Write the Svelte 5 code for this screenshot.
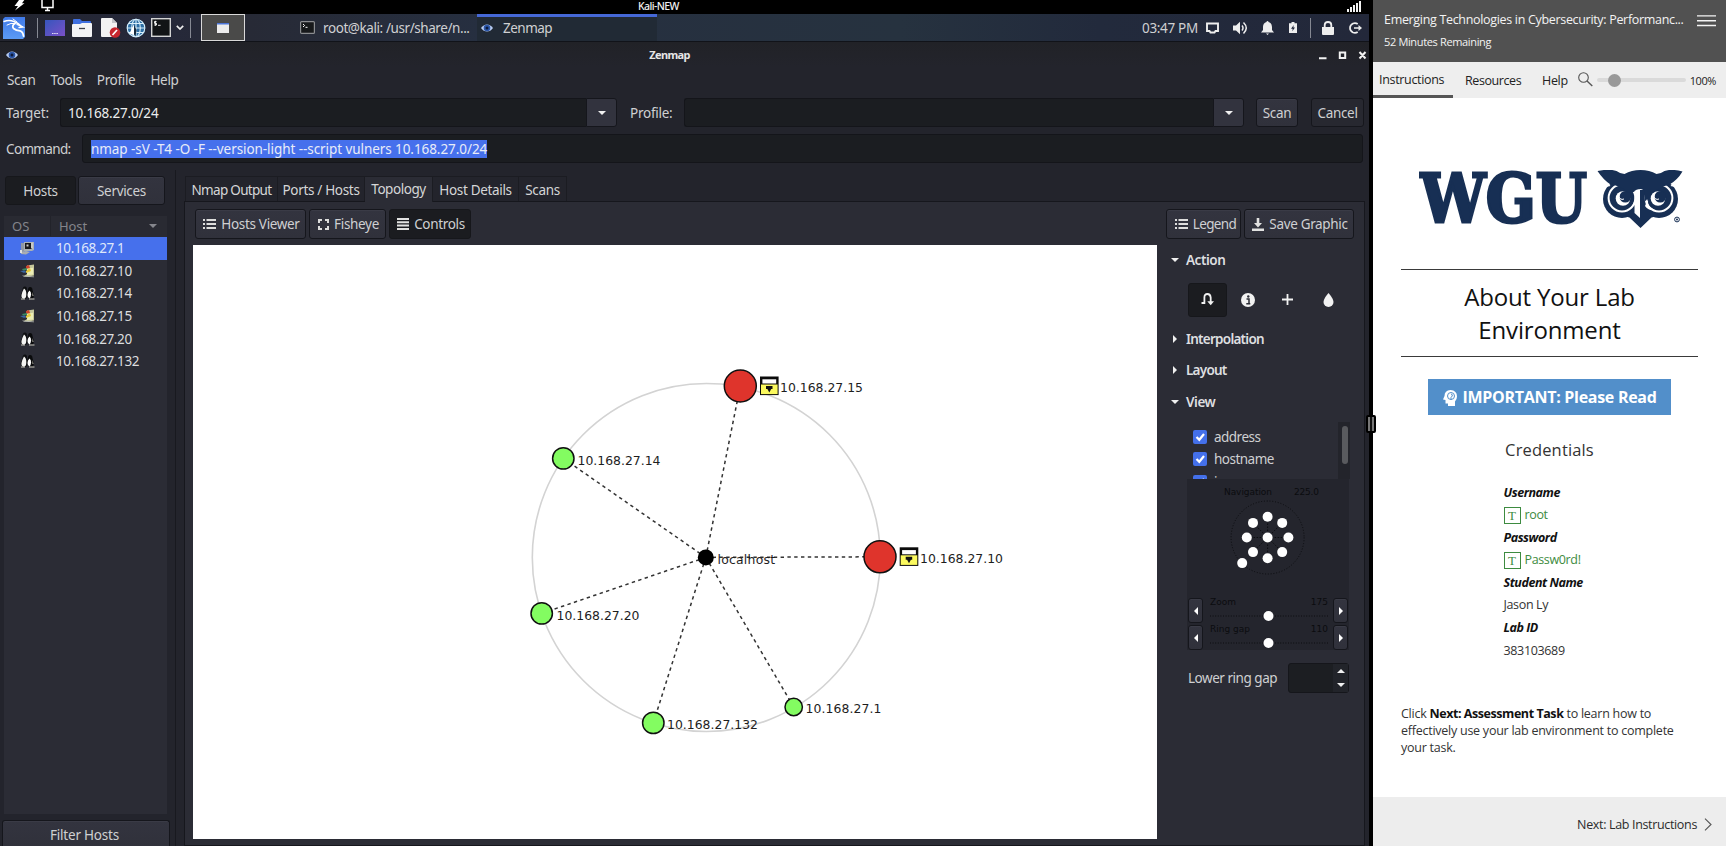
<script>
  const menus = ['Scan', 'Tools', 'Profile', 'Help'];

  const hosts = [
    { ip: '10.168.27.1', os: 'router' },
    { ip: '10.168.27.10', os: 'windows' },
    { ip: '10.168.27.14', os: 'linux' },
    { ip: '10.168.27.15', os: 'windows' },
    { ip: '10.168.27.20', os: 'linux' },
    { ip: '10.168.27.132', os: 'linux' }
  ];
  let selectedHost = $state('10.168.27.1');

  const tabs = [
    { label: 'Nmap Output', width: 93, tight: true },
    { label: 'Ports / Hosts', width: 87 },
    { label: 'Topology', width: 68, tight: true },
    { label: 'Host Details', width: 86 },
    { label: 'Scans', width: 48 }
  ];
  let activeTab = $state('Topology');

  const center = { x: 705.8, y: 557.4 };
  const nodes = [
    { ip: '10.168.27.15', x: 740.3, y: 386, r: 16, risk: 'high', tx: 780, w: 83 },
    { ip: '10.168.27.14', x: 563.3, y: 458.4, r: 10.7, risk: 'low', tx: 577.5, w: 83 },
    { ip: '10.168.27.20', x: 541.7, y: 613.4, r: 10.7, risk: 'low', tx: 556.5, w: 83 },
    { ip: '10.168.27.132', x: 653.3, y: 722.9, r: 10.7, risk: 'low', tx: 667, w: 91 },
    { ip: '10.168.27.1', x: 793.7, y: 707, r: 8.7, risk: 'low', tx: 805.5, w: 76 },
    { ip: '10.168.27.10', x: 880, y: 556.8, r: 16, risk: 'high', tx: 920, w: 83 }
  ];

  const navDots = [
    [0, 0], [0, -20.8], [14.6, -14.6], [20.8, 0], [14.6, 14.6],
    [0, 20.8], [-14.6, 14.6], [-20.8, 0], [-14.6, -14.6], [-25.4, 25.6]
  ];

  const sliders = [
    { name: 'Zoom', value: '175' },
    { name: 'Ring gap', value: '110' }
  ];

  const signal = [3, 5, 7, 9, 11];
</script>

{#snippet eye()}
  <svg width="12" height="8" viewBox="0 0 12 8">
    <path d="M0 4Q2.5 .4 6 .4T12 4Q9.500 7.600 6 7.600T0 4Z" fill="#b9cdf3" />
    <circle cx="6" cy="4" r="3.300" fill="#2b56a8" />
    <circle cx="6" cy="4" r="1.500" fill="#0c1a3a" />
  </svg>
{/snippet}

{#snippet listIcon()}
  <svg width="13" height="10" viewBox="0 0 13 10" fill="#dededd">
    <path d="M0 0h2v2H0zM3.500 0H13v2H3.500zM0 4h2v2H0zM3.500 4H13v2H3.500zM0 8h2v2H0zM3.500 8H13v2H3.500z" />
  </svg>
{/snippet}

{#snippet osIcon(os)}
  <svg width="15" height="14" viewBox="0 0 15 14">
    {#if os === 'router'}
      <path d="M1 2h3v10H1z" fill="#8f98a4" />
      <path d="M4 1h10v8l-2 1H4z" fill="#a9b0b5" />
      <path d="M5 2h7v6H5z" fill="#17191b" />
      <path d="M6.500 3.500h2v2h-2zM11 1.500h2v6h-2z" fill="#c9cac6" />
      <path d="M1 11l5-1 4 1-4 2.500-5-.5z" fill="#a9adb0" />
      <path d="M0 9h2v3H0z" fill="#dfe2e4" />
    {:else if os === 'windows'}
      <path d="M7 1.500l7-1v11l-4 .8-6-.4 3-2z" fill="#c4c59a" />
      <path d="M7 4.500l6-.8v6.800l-6 .7z" fill="#ecedb4" />
      <path d="M6 2l3-1 1 3-4 1z" fill="#c9442c" />
      <path d="M2 5l5-1v2l-4 .6z" fill="#3b8a60" />
      <path d="M0 7l5-.5 1.500 2-3 .3z" fill="#3a66a0" />
      <path d="M6 7l4-3 1 3-5 2z" fill="#e5c93a" />
      <path d="M2 11.500l7 .4 5 .6v.8L4 12.800z" fill="#b9bcb2" />
    {:else}
      <path d="M5 .5q2 0 2 3 1.500 3 1 7l-2 2.500H2L.5 10 2.500 4q0-3.500 2.500-3.500z" fill="#0d0e10" />
      <path d="M4 2.500q2.500 1.500 2.300 6T3.500 12.800Q1 12 1.500 9T4 2.500z" fill="#f4f4f2" />
      <path d="M10 1q2.500 0 2.500 3l1.500 5.500-1 3H8.500l-1-3L8 4q0-3 2-3z" fill="#0a0b0c" />
      <path d="M9.500 4.500q1.800 1.500 1.600 4T9.500 12.500Q7.500 12 7.500 9t2-4.500z" fill="#fff" />
      <path d="M1 12.500h4v1H1zM9 12.500h5.500v1H9zM12.500 6l1 4h-1z" fill="#c9c8bd" />
    {/if}
  </svg>
{/snippet}

{#snippet typeIcon()}
  <span class="type-icon">T</span>
{/snippet}

<div class="screen">
  <div class="desktop">
    <div class="vmbar">
      <div class="vm-left">
        <svg width="11" height="12" viewBox="0 0 11 12" fill="#fff"><path d="M5 0l6-1-3 4.200h2.500L1 10.500 4 6H.5z" /></svg>
        <svg width="13" height="12" viewBox="0 0 13 12" fill="none" stroke="#fff" stroke-width="1.500"><path d="M1 0v7.500h11V0M4 10.500h5M6.500 8v2" /></svg>
      </div>
      <span class="vm-name">Kali-NEW</span>
      <div class="signal">
        {#each signal as h}<i style="height:{h}px"></i>{/each}
      </div>
    </div>

    <div class="panel">
      <svg class="kali" width="22" height="22" viewBox="0 0 22 22">
        <defs>
          <linearGradient id="kali" x1="0" y1="0" x2="0" y2="1"><stop offset="0" stop-color="#3f79e8" /><stop offset="1" stop-color="#5c9bf5" /></linearGradient>
        </defs>
        <path d="M2 0h20v20l-2 2H0V2z" fill="url(#kali)" />
        <g fill="none" stroke="#fff" stroke-linecap="round">
          <path d="M1 4.500Q6 2.500 11 4.500T18.500 9.500" stroke-width="1.400" />
          <path d="M4 8Q8 5.500 12 6.500" stroke-width="1" />
          <path d="M12 6.500Q8.500 8.500 10.500 11.500 13 13.500 17 13.800 20 14.500 20.500 19" stroke-width="1.800" />
          <path d="M14 7.500l6 2.500-4 .5" stroke-width="1.300" />
          <path d="M10 2l4 3" stroke-width="1" />
        </g>
      </svg>
      <i class="rule r1"></i>
      <svg class="i-desk" width="20" height="16" viewBox="0 0 20 16">
        <defs><linearGradient id="desk" x1="0" x2="1" y2="1"><stop offset="0" stop-color="#3656bd" /><stop offset="1" stop-color="#7a50c8" /></linearGradient></defs>
        <rect width="20" height="16" fill="url(#desk)" /><path d="M7 13.500h6" stroke="#e6e2f5" stroke-dasharray="1.500 .7" />
      </svg>
      <svg class="i-folder" width="20" height="18" viewBox="0 0 20 18">
        <path d="M1 1q0-1 1-1h6l2 2h8q1 0 1 1v5H1z" fill="#3e6fe0" /><path d="M0 6q0-1 1-1h7l2-1h9q1 0 1 1v12q0 1-1 1H1q-1 0-1-1z" fill="#f2f3f5" /><path d="M7 9.500h6" stroke="#3c4048" stroke-width="1.300" />
      </svg>
      <svg class="i-edit" width="20" height="20" viewBox="0 0 20 20">
        <path d="M1 0h10l5 5v14H1q-1 0-1-1V1q0-1 1-1z" fill="#f2f2f2" /><path d="M11 0l5 5h-5z" fill="#c4c6ca" /><circle cx="14" cy="14.500" r="5.300" fill="#c6262e" /><path d="M11.500 17l4.500-5" stroke="#fff" stroke-width="1.700" />
      </svg>
      <svg class="i-globe" width="20" height="20" viewBox="0 0 20 20">
        <circle cx="10" cy="10" r="9.300" fill="#2d6fa6" /><g fill="none" stroke="#d8eefa" stroke-width="1.100"><circle cx="10" cy="10" r="8.800" /><ellipse cx="10" cy="10" rx="4.300" ry="8.800" /><path d="M10 1v18M1 10h18M2.500 5.500h15M2.500 14.500h15" /></g><path d="M8 6v11L3.500 15.500z" fill="#fff" /><path d="M8 7v9l1.500 2.500L10.500 12z" fill="#16293d" />
      </svg>
      <svg class="i-term" width="20" height="19" viewBox="0 0 20 19">
        <rect x=".7" y=".7" width="18.600" height="17.600" fill="#121416" stroke="#d4d4d4" stroke-width="1.400" /><path d="M5.500 3.500H3.500v1.800h2V7H3.300M4.400 2.800v5M7 7.300h2.600" stroke="#fff" stroke-width=".9" fill="none" />
      </svg>
      <svg class="i-chev" width="8" height="5" viewBox="0 0 8 5" fill="none" stroke="#eee" stroke-width="1.700"><path d="M.8.8L4 4 7.200.8" /></svg>
      <i class="rule r2"></i>
      <div class="workspace"><svg width="12" height="10" viewBox="0 0 12 10"><rect width="12" height="10" fill="#ececec" /><rect width="12" height="1.500" fill="#4a74d8" /></svg></div>
      <div class="task">
        <svg width="15" height="13" viewBox="0 0 15 13"><rect x=".6" y=".6" width="13.800" height="11.800" rx="1" fill="#17191b" stroke="#8b8d90" stroke-width="1.200" /><path d="M3 3l1.600 1.500L3 6M5.500 6.300h2" stroke="#fff" fill="none" /></svg>
        <span>root@kali: /usr/share/n...</span>
      </div>
      <div class="task current">
        {@render eye()}
        <span>Zenmap</span>
      </div>
      <span class="clock">03:47 PM</span>
      <div class="tray">
        <svg width="13" height="12" viewBox="0 0 13 12" fill="none" stroke="#eee" stroke-width="1.900"><path d="M1 1.500h11v7.500H9.500l-1 1.500h-4l-1-1.500H1z" /></svg>
        <svg width="15" height="14" viewBox="0 0 15 14" fill="#eee"><path d="M0 4.500h3L7 .8v12.400L3 9.500H0z" /><path d="M9 4.500q2 2.500 0 5M10.500 1.500Q16 7 10.500 12.500" fill="none" stroke="#eee" stroke-width="1.500" /></svg>
        <svg width="13" height="14" viewBox="0 0 13 14" fill="#eee"><path d="M6.500 0q1 0 1 1Q11 2 11 6v3l2 2.500H0L2 9V6q0-4 3.500-5 0-1 1-1zM5 12.500h3L6.500 14z" /></svg>
        <svg width="8" height="11" viewBox="0 0 8 11" fill="#eee"><path d="M2.500 0h3v1.300H8V11H0V1.300h2.500z" /><path d="M4.800 3L2 6.700h1.700L3.300 9.300 6 5.600H4.300z" fill="#20263a" /></svg>
        <i class="rule r3"></i>
        <svg width="12" height="14" viewBox="0 0 12 14" fill="#eee"><path d="M0 6h12v7q0 1-1 1H1q-1 0-1-1z" /><path d="M2.700 7V4q0-3 3.300-3t3.300 3v3" fill="none" stroke="#eee" stroke-width="1.800" /></svg>
        <svg width="13" height="12" viewBox="0 0 13 12" fill="none" stroke="#eee" stroke-width="1.700"><path d="M8.700 2Q6.500.4 4 1.500 1 3 1 6t3 4.500q2.500 1 4.700-.5M5 6h6" /><path d="M9.500 3l3.500 3-3.500 3z" fill="#eee" stroke="none" /></svg>
      </div>
    </div>

    <div class="titlebar">
      <span class="title-icon">{@render eye()}</span>
      <strong>Zenmap</strong>
      <svg width="49" height="10" viewBox="0 0 49 10" fill="none" stroke="#f2f2f2" stroke-width="2"><path d="M1 8.200h7.500M21.800 2.500h5.400v5.600h-5.400zM41.500 2l6 6.500M47.500 2l-6 6.500" /></svg>
    </div>

    <nav class="menubar">
      {#each menus as m}<span>{m}</span>{/each}
    </nav>

    <div class="form-row">
      <span class="lbl-target">Target:</span>
      <div class="combo target">
        <div class="entry light">10.168.27.0/24</div>
        <button class="drop" aria-label="Target history"><i class="tri down"></i></button>
      </div>
      <span class="lbl-profile">Profile:</span>
      <div class="combo profile">
        <div class="entry"></div>
        <button class="drop" aria-label="Profiles"><i class="tri down"></i></button>
      </div>
      <button class="btn scan">Scan</button>
      <button class="btn cancel">Cancel</button>
    </div>

    <div class="form-row command">
      <span class="lbl-command">Command:</span>
      <div class="entry cmd"><span class="sel">nmap -sV -T4 -O -F --version-light --script vulners 10.168.27.0/24</span></div>
    </div>

    <div class="main">
      <aside class="hosts">
        <div class="switch">
          <button class="btn pressed">Hosts</button>
          <button class="btn">Services</button>
        </div>
        <div class="host-table">
          <div class="thead"><span class="os">OS</span><span class="host">Host</span><i class="tri down dim"></i></div>
          {#each hosts as h}
            <button class="host-row" class:selected={h.ip === selectedHost} onclick={() => (selectedHost = h.ip)}>
              {@render osIcon(h.os)}<span>{h.ip}</span>
            </button>
          {/each}
        </div>
        <button class="btn filter">Filter Hosts</button>
      </aside>

      <section class="notebook">
        <div class="tabs">
          {#each tabs as t}
            <button class="tab" class:active={t.label === activeTab} class:tight={t.tight} style="width:{t.width}px" onclick={() => (activeTab = t.label)}>{t.label}</button>
          {/each}
        </div>
        <div class="page">
          <div class="toolbar">
            <button class="btn viewer">{@render listIcon()}Hosts Viewer</button>
            <button class="btn fisheye"><svg width="11" height="11" viewBox="0 0 11 11" fill="none" stroke="#dededd" stroke-width="2"><path d="M1 4V1h3M7 1h3v3M10 7v3H7M4 10H1V7" /></svg>Fisheye</button>
            <button class="btn pressed controls"><svg width="12" height="12" viewBox="0 0 12 12" stroke="#e2e2e1" stroke-width="2"><path d="M0 1h12M0 4.300h12M0 7.600h12M0 11h12" /></svg>Controls</button>
            <button class="btn legend">{@render listIcon()}Legend</button>
            <button class="btn save"><svg width="12" height="13" viewBox="0 0 12 13" fill="#e2e2e1"><path d="M4.700 0h2.600v5H10L6 9.500 2 5h2.700zM0 10.500h12V13H0z" /></svg>Save Graphic</button>
          </div>
          <div class="workarea">
            <svg class="topology" viewBox="193 245 964 594">
              <circle cx="706.300" cy="557.500" r="174" fill="none" stroke="#d3d3d3" stroke-width="1.600" />
              {#each nodes as n}
                <line x1={center.x} y1={center.y} x2={n.x} y2={n.y} stroke="#333" stroke-width="1.500" stroke-dasharray="3.400 3.400" />
              {/each}
              <circle cx={center.x} cy={center.y} r="8" fill="#000" />
              <text x="717.500" y="563.800" textLength="57.500">localhost</text>
              {#each nodes as n}
                <circle class={n.risk} cx={n.x} cy={n.y} r={n.r} stroke="#101010" stroke-width="1.500" />
                {#if n.risk === 'high'}
                  <g transform="translate({n.x + 19.700} {n.y - 9.500})">
                    <rect width="18.600" height="18.600" fill="#0b0b0b" />
                    <rect x="2.400" y="2.800" width="13.800" height="4.200" fill="#fff" />
                    <rect x="1" y="8" width="16.600" height="9.600" fill="#fbf95e" />
                    <path d="M6 9.500h6.500v3h-1.300l-1.900 3.500-1.900-3.500H6z" fill="#111" />
                  </g>
                {/if}
                <text x={n.tx} y={n.y + 6.300} textLength={n.w}>{n.ip}</text>
              {/each}
            </svg>

            <aside class="controls-pane">
              <h4><i class="tri down"></i>Action</h4>
              <div class="actions">
                <button class="pressed" aria-label="Change focus"><svg width="13" height="13" viewBox="0 0 13 13" fill="none" stroke="#f2f2f2" stroke-width="1.800"><path d="M.5 10H3.400V4.500Q3.400 1 6.400 1T9.700 4.500V9" /><path d="M6.300 8.200H13L9.700 12.300z" fill="#f2f2f2" stroke="none" /></svg></button>
                <button aria-label="Show information"><svg width="14" height="14" viewBox="0 0 14 14"><circle cx="7" cy="7" r="7" fill="#f2f2f2" /><path d="M5.500 6H8v4.500M5.300 10.700h4" stroke="#2b2c35" stroke-width="1.500" fill="none" /><circle cx="7.300" cy="3.500" r="1.200" fill="#2b2c35" /></svg></button>
                <button aria-label="Group children"><svg width="11" height="11" viewBox="0 0 11 11" stroke="#f2f2f2" stroke-width="1.800"><path d="M5.500 0v11M0 5.500h11" /></svg></button>
                <button aria-label="Fill region"><svg width="11" height="14" viewBox="0 0 11 14" fill="#f2f2f2"><path d="M5.500 0Q10.500 5.800 10.500 9a5 5 0 0 1-10 0Q.5 5.800 5.500 0z" /></svg></button>
              </div>
              <h4 class="tight"><i class="tri right"></i>Interpolation</h4>
              <h4 class="tight"><i class="tri right"></i>Layout</h4>
              <h4><i class="tri down"></i>View</h4>
              <div class="view-list">
                <div class="checks">
                  {#each ['address', 'hostname', 'icon'] as c}
                    <div class="check"><svg width="14" height="14" viewBox="0 0 14 14"><rect width="14" height="14" rx="2" fill="#4470ea" /><path d="M3.500 7l2.800 2.800L11 4" fill="none" stroke="#fff" stroke-width="2.200" /></svg><span>{c}</span></div>
                  {/each}
                </div>
                <div class="scroll"><i></i></div>
              </div>
              <div class="navigator">
                <svg width="162" height="115" viewBox="0 0 162 115">
                  <text x="37" y="15.500" textLength="48">Navigation</text>
                  <text x="107" y="15.500" textLength="25">225.0</text>
                  <g transform="translate(80.600 58.500)">
                    <circle r="36.500" fill="none" stroke="#0c0d10" stroke-dasharray="1 1.800" />
                    <path d="M-20 0H20M0-20V20M-14-14L14 14M14-14L-14 14" stroke="#0c0d10" stroke-dasharray="1.500 1.500" />
                    {#each navDots as [x, y]}<circle cx={x} cy={y} r="5" fill="#fff" />{/each}
                  </g>
                </svg>
                {#each sliders as s}
                  <div class="slider">
                    <button class="btn" aria-label="Decrease {s.name}"><svg width="4" height="8" viewBox="0 0 4 8"><path d="M4 0v8L0 4z" fill="#fff" /></svg></button>
                    <svg width="125" height="27" viewBox="0 0 125 27">
                      <text x="4" y="9">{s.name}</text>
                      <text x="122" y="9" text-anchor="end">{s.value}</text>
                      <path d="M4 20h118" stroke="#0c0d10" stroke-dasharray="1 1.600" />
                      <circle cx="62.500" cy="20" r="5" fill="#fff" />
                    </svg>
                    <button class="btn" aria-label="Increase {s.name}"><svg width="4" height="8" viewBox="0 0 4 8"><path d="M0 0v8l4-4z" fill="#fff" /></svg></button>
                  </div>
                {/each}
              </div>
              <div class="lower">
                <span>Lower ring gap</span>
                <div class="spin"><div><i class="tri up"></i><i class="tri down"></i></div></div>
              </div>
            </aside>
          </div>
        </div>
      </section>
    </div>
    <div class="grip"></div>
  </div>

  <div class="lab">
    <header>
      <div>
        <p class="course">Emerging Technologies in Cybersecurity: Performanc...</p>
        <p class="time">52 Minutes Remaining</p>
      </div>
      <svg width="19" height="12" viewBox="0 0 19 12" stroke="#f4f4f4" stroke-width="1.400"><path d="M0 .9h19M0 5.700h19M0 10.500h19" /></svg>
    </header>
    <nav class="lab-nav">
      <span class="on">Instructions</span>
      <span class="res">Resources</span>
      <span>Help</span>
      <svg width="15" height="15" viewBox="0 0 15 15" fill="none" stroke="#555" stroke-width="1.100"><circle cx="5.500" cy="5.500" r="4.800" /><path d="M9 9l5.300 5" stroke-width="1.400" /></svg>
      <div class="zoom"><i></i></div>
      <span class="pct">100%</span>
    </nav>

    <article>
      <div class="logo">
        <svg width="266" height="62" viewBox="0 0 266 62">
          <g fill="#172f54">
            <text class="wordmark" x="1" y="51.500" textLength="167" lengthAdjust="spacingAndGlyphs">WGU</text>
            <g transform="translate(178.500 0)">
              <circle cx="24.500" cy="29" r="19" />
              <circle cx="61.500" cy="29" r="19" />
              <path d="M26 20h34v26L54 47.500 43 58 32 47.500 26 46z" />
              <g fill="none" stroke="#fff" stroke-width="2">
                <circle cx="24.500" cy="28" r="13.400" />
                <circle cx="61.500" cy="28" r="13.400" />
              </g>
              <path d="M-1 1L13 16 4 18 0 10zM86 1L73 16l9 2 4-8z" fill="#fff" />
              <circle cx="25.500" cy="28.500" r="7.300" fill="#fff" />
              <circle cx="60.500" cy="28.500" r="7.300" fill="#fff" />
              <circle cx="27.800" cy="26.800" r="5.800" />
              <circle cx="62.800" cy="26.800" r="5.800" />
              <path d="M21.500 25a3.500 3.500 0 0 0 5 4M56.500 25a3.500 3.500 0 0 0 5 4" fill="none" stroke="#fff" stroke-width="1" />
              <path d="M0 1Q12-1.500 19 1 23 4 27 4 34 0 43 0t16 4Q63 4 67 1 74-1.500 85 1.500 80 10 72 14.500 62 17 55 23L47 32V20l-4-1-7 3-5 1Q24 16 13 14.500 6 10 0 1z" />
              <path d="M37 21q3-2.500 5.500-1.500V48L37 43V35l-5 4q5-6 5-10z" fill="#fff" />
              <path d="M50.500 29q-1 8 7 11-7 1-10-4z" fill="#fff" />
              <circle cx="79.500" cy="49.500" r="2.400" fill="none" stroke="#172f54" stroke-width="1" /><circle cx="79.500" cy="49.500" r="1" />
            </g>
          </g>
        </svg>
      </div>
      <h1>About Your Lab Environment</h1>
      <div class="important">
        <svg width="14" height="16" viewBox="0 0 14 16"><path d="M7.500 0Q14 .5 14 6.500q0 3-2 5V16H5v-2.500H2.500V10L0 9.500 1.500 6Q1.500.5 7.500 0z" fill="#fff" /><circle cx="8" cy="6" r="3.500" fill="none" stroke="#528fca" stroke-width="1" /><path d="M8 4q2 .5 1.200 2L8 7.500V10" fill="none" stroke="#528fca" /></svg>
        IMPORTANT: Please Read
      </div>
      <h2>Credentials</h2>
      <dl>
        <dt>Username</dt>
        <dd class="green">{@render typeIcon()}root</dd>
        <dt>Password</dt>
        <dd class="green">{@render typeIcon()}Passw0rd!</dd>
        <dt>Student Name</dt>
        <dd>Jason Ly</dd>
        <dt>Lab ID</dt>
        <dd>383103689</dd>
      </dl>
      <p class="note">Click <b>Next: Assessment Task</b> to learn how to<br />effectively use your lab environment to complete<br />your task.</p>
    </article>

    <footer>
      <span>Next: Lab Instructions</span>
      <svg width="8" height="13" viewBox="0 0 8 13" fill="none" stroke="#555" stroke-width="1.100"><path d="M1 .7l6 5.800-6 5.800" /></svg>
    </footer>
  </div>
</div>

<style>
  .screen { display: flex; width: 1726px; height: 846px; overflow: hidden; background: #fff; }
  .screen, .screen * { box-sizing: border-box; }
  svg { display: block; flex: none; }
  button { font: inherit; letter-spacing: inherit; color: inherit; padding: 0; margin: 0; border: 0; background: none; cursor: default; }
  p, h1, h2, h4, dl, dd { margin: 0; }
  span { white-space: nowrap; }

  .desktop {
    position: relative; width: 1373px; flex: none; display: flex; flex-direction: column;
    background: #23242c; border-right: 4px solid #000; color: #cfd0d2;
    font: 13.5px/18px "Noto Sans", sans-serif; letter-spacing: -.32px;
  }

  .vmbar { height: 14px; flex: none; margin-right: -4px; background: #000; display: flex; align-items: flex-start; color: #f0f0f0; }
  .vm-left { display: flex; gap: 16px; padding-left: 14px; width: 638px; }
  .vm-name { font-size: 10.5px; line-height: 12px; font-weight: 500; letter-spacing: -.6px; }
  .signal { margin-left: auto; margin-right: 12px; height: 12px; display: flex; align-items: flex-end; gap: 1px; }
  .signal i { width: 2px; background: #f4f4f4; }

  .panel {
    height: 28px; flex: none; display: flex; align-items: center; padding: 0 0 0 3px;
    border-bottom: 1px solid #111319;
    background: linear-gradient(90deg, #23252f 0, #25283a 150px, #272a36 250px, #262f40 480px, #26323f 900px, #222a3c 1100px, #23283a 100%);
  }
  .rule { width: 1px; height: 20px; background: #868993; flex: none; }
  .r1 { margin: 0 7px 0 12px; }
  .i-folder { margin-left: 7px; }
  .i-edit { margin-left: 9px; }
  .i-globe { margin-left: 5px; }
  .i-term { margin-left: 5px; }
  .i-chev { margin-left: 5px; }
  .r2 { margin: 0 10px 0 6px; }
  .workspace { width: 44px; height: 27px; border: 1px solid #d9d9d9; background: #4a4a49; display: flex; align-items: center; justify-content: center; }
  .task { height: 27px; display: flex; align-items: center; gap: 8px; margin-left: 45px; padding-left: 10px; width: 187px; letter-spacing: -.42px; }
  .task.current { width: 180px; margin-left: 0; padding-left: 4px; gap: 10px; background: #212a35; border-top: 3px solid #4568d6; padding-bottom: 3px; letter-spacing: -.5px; }
  .clock { margin-left: auto; width: 62px; }
  .tray { display: flex; align-items: center; width: 165px; gap: 14px; padding-left: 2px; }
  .tray .rule { margin: 0 -3px 0 -1px; }
  .tray svg:nth-child(3) { margin-left: -1px; margin-right: 1px; }
  .tray svg:last-child { margin-left: 1px; }

  .titlebar { height: 25px; flex: none; display: flex; align-items: center; justify-content: space-between; padding: 0 2px 0 6px; background: linear-gradient(#212227, #23242c); }
  .title-icon { width: 49px; }
  .titlebar strong { font-size: 11px; font-weight: 700; letter-spacing: -.65px; color: #e6e6e6; margin-right: 34px; }

  .menubar { height: 31px; flex: none; display: flex; gap: 15px; padding: 4px 0 0 7px; }

  .form-row { height: 29px; flex: none; display: flex; align-items: center; padding: 0 3px 0 6px; }
  .lbl-target { width: 54px; letter-spacing: -.12px; }
  .lbl-profile { width: 54px; margin-left: 13px; letter-spacing: -.25px; }
  .lbl-command { width: 76px; padding-top: 1px; letter-spacing: -.65px; }
  .form-row.command { margin-top: 7px; padding-right: 6px; }
  .combo { display: flex; height: 29px; }
  .target { width: 557px; }
  .profile { width: 560px; }
  .entry { flex: 1; height: 29px; padding-left: 7px; display: flex; align-items: center; background: #1b1d21; border: 1px solid #14151a; border-radius: 3px; color: #eceded; letter-spacing: -.19px; }
  .entry.cmd { padding: 1px 0 0 8px; }
  .combo .entry { border-radius: 3px 0 0 3px; border-right: 0; }
  .drop { width: 31px; border: 1px solid #15161c; border-radius: 0 3px 3px 0; background: #32333e; display: flex; align-items: center; justify-content: center; }
  .sel { background: #4670ec; color: #e8ecf8; line-height: 18px; letter-spacing: -.07px; }

  .btn { display: flex; align-items: center; justify-content: center; background: linear-gradient(#33343f, #30313b); border: 1px solid #15161c; border-radius: 3px; box-shadow: inset 0 1px #3a3b46; }
  .pressed { background: #1b1c20; box-shadow: none; border: 1px solid #16171b; border-radius: 3px; }
  .scan { width: 42px; height: 29px; margin-left: 12px; }
  .cancel { width: 53px; height: 29px; margin-left: 13px; padding-top: 1px; background: #272830; box-shadow: none; }

  .tri { display: block; width: 0; height: 0; border: 4px solid transparent; flex: none; }
  .tri.down { border-top: 4px solid #f0f0f0; border-bottom: 0; }
  .tri.up { border-bottom: 4px solid #f0f0f0; border-top: 0; }
  .tri.right { border-left: 4px solid #f0f0f0; border-right: 0; }
  .tri.dim { border-top-color: #85868c; }

  .main { flex: 1; min-height: 0; display: flex; }
  .hosts { width: 176px; padding: 6px 6px 0 2px; display: flex; flex-direction: column; border-right: 1px solid #18191f; margin-top: 7px; }
  .switch { display: flex; gap: 2px; padding-left: 3px; margin-bottom: 11px; }
  .switch .btn { height: 29px; width: 87px; }
  .switch .pressed { width: 71px; background: #1b1c20; box-shadow: none; }
  .host-table { width: 163px; margin-left: 2px; background: #2b2c35; flex: 1; }
  .thead { height: 21px; display: flex; align-items: center; font-size: 13px; letter-spacing: 0; color: #84858b; padding: 0 10px 2px 8px; background: #292a32; }
  .thead .os { width: 39px; height: 20px; line-height: 21px; border-right: 1px solid #22232a; }
  .thead .host { padding-left: 8px; flex: 1; letter-spacing: -.1px; }
  .host-row { display: flex; align-items: center; width: 163px; height: 22.6px; padding-left: 16px; gap: 21px; letter-spacing: -.38px; color: #dcdddf; }
  .host-row.selected { background: #4670ec; color: #dfe7fb; }
  .filter { height: 26px; margin-top: 6px; width: 168px; padding: 3px 3px 0 0; letter-spacing: -.22px; border-bottom: 0; border-radius: 3px 3px 0 0; }

  .notebook { flex: 1; display: flex; flex-direction: column; padding: 13px 4px 2px 8px; }
  .tabs { display: flex; height: 25px; padding-left: 1px; position: relative; z-index: 1; }
  .tab { height: 25px; border-top: 1px solid #1b1c22; border-right: 1px solid #1b1c22; color: #d5d6d7; padding-top: 1px; }
  .tab:first-child { border-left: 1px solid #1b1c22; }
  .tab.tight { letter-spacing: -.7px; }
  .tab.active { background: #2b2c35; height: 26px; padding-bottom: 2px; letter-spacing: -.45px; }
  .page { flex: 1; border: 1px solid #16171d; background: #2b2c35; display: flex; flex-direction: column; }
  .toolbar { display: flex; padding: 7px 10px 6px 10px; gap: 3px; }
  .toolbar .btn { height: 30px; gap: 5px; letter-spacing: -.33px; padding-left: 2px; }
  .viewer { width: 111px; }
  .fisheye { width: 77px; }
  .controls { width: 82px; }
  .legend { width: 75px; margin-left: auto; }
  .toolbar .legend { letter-spacing: -.62px; padding-left: 4px; }
  .save { width: 110px; }
  .workarea { flex: 1; display: flex; padding: 0 0 6px 8px; min-height: 0; }
  .topology { width: 964px; height: 594px; background: #fff; font: 12.400px "DejaVu Sans", sans-serif; letter-spacing: 0; }
  .topology text { fill: #1e1e1e; }
  .low { fill: #83fc61; }
  .high { fill: #df342c; }

  .controls-pane { width: 206px; padding: 6px 0 0 14px; }
  h4 { height: 18px; display: flex; align-items: center; gap: 7px; font-size: 13.5px; line-height: 18px; font-weight: 600; letter-spacing: -.45px; color: #dedfe0; margin-bottom: 13.6px; }
  h4.tight { letter-spacing: -.75px; }
  .tri.right { margin: 0 2px; }
  .actions { display: flex; margin: 0 0 13px 17px; gap: 1.800px; height: 34px; }
  .actions button { width: 38.500px; height: 34px; display: flex; align-items: center; justify-content: center; }
  .view-list { margin: -2px 0 0 16px; width: 163px; height: 57px; display: flex; overflow: hidden; }
  .checks { flex: 1; padding: 3px 0 0 6px; }
  .check { display: flex; align-items: center; height: 22.600px; gap: 7px; letter-spacing: -.52px; }
  .scroll { width: 12px; background: #23242b; padding: 4px 0 0 4px; }
  .scroll i { display: block; width: 6px; height: 38px; border-radius: 3px; background: #595a5e; }
  .navigator { margin-left: 16px; width: 162px; background: #24252d; font: 9px "DejaVu Sans", sans-serif; letter-spacing: 0; }
  .navigator > svg { margin-bottom: 2px; }
  .navigator text { fill: #0b0c0f; }
  .slider { display: flex; align-items: center; gap: 2.500px; height: 27px; padding: 0 1px 0 1px; }
  .slider .btn { width: 15px; height: 25px; margin-top: 2px; }
  .lower { display: flex; justify-content: space-between; align-items: center; margin: 13px 14px 0 17px; letter-spacing: -.47px; }
  .spin { width: 61px; height: 30px; background: #1c1e22; border: 1px solid #15161b; border-radius: 3px; display: flex; justify-content: flex-end; }
  .spin div { width: 15px; background: #22242a; display: flex; flex-direction: column; align-items: center; justify-content: space-between; padding: 5px 0; }

  .grip { position: absolute; right: -7px; top: 415px; width: 10px; height: 18px; border: 2px solid #000; border-radius: 2px; background: linear-gradient(90deg, #777 0 2px, #111 2px 4px, #777 4px); z-index: 3; }

  .lab { flex: 1; display: flex; flex-direction: column; color: #333; font: 12.5px/17px "Open Sans", "Noto Sans", sans-serif; letter-spacing: -.32px; }
  header { height: 62px; background: #515151; color: #f3f3f3; display: flex; justify-content: space-between; padding: 11px 10px 0 11px; }
  header svg { margin-top: 4px; }
  .time { font-size: 11px; letter-spacing: -.35px; margin-top: 5px; }
  .lab-nav { height: 36px; background: #eee; display: flex; align-items: center; color: #222; }
  .lab-nav .on { width: 80px; height: 36px; line-height: 35px; padding-left: 6px; border-bottom: 3px solid #555; }
  .lab-nav .res { width: 89px; padding-left: 12px; letter-spacing: -.42px; }
  .lab-nav svg { margin-left: 10px; margin-top: -1px; }
  .zoom { width: 89px; height: 4px; margin-left: 4px; border-radius: 2px; background: #dadada; display: flex; align-items: center; }
  .zoom i { width: 13px; height: 13px; border-radius: 50%; background: #999; margin-left: 11px; flex: none; }
  .pct { font-size: 11px; letter-spacing: -.45px; margin-left: 4px; }

  article { flex: 1; padding: 72px 28px 0; display: flex; flex-direction: column; align-items: center; }
  .logo { height: 99px; padding-left: 4px; }
  .wordmark { font: bold 67px "DejaVu Serif", serif; letter-spacing: 0; stroke: #172f54; stroke-width: 3px; }
  h1 { width: 297px; height: 88px; padding: 10px 50px 0; border: solid #3a3a3a; border-width: 1px 0; text-align: center; color: #111; font-size: 24px; line-height: 33px; font-weight: 400; letter-spacing: -.16px; }
  .important { width: 243px; height: 36px; margin-top: 22px; padding: 1px 0 0 1px; background: #528fca; color: #fff; font-size: 16px; font-weight: 700; letter-spacing: -.29px; display: flex; align-items: center; justify-content: center; gap: 5px; }
  h2 { font-size: 16.500px; line-height: 22px; font-weight: 400; letter-spacing: .15px; margin-top: 24px; color: #333; }
  dl { width: 94px; margin: 20.500px 0 0 2px; line-height: 22.600px; }
  dt { font-weight: 700; font-style: italic; color: #111; letter-spacing: -.45px; white-space: nowrap; }
  dd { display: flex; align-items: center; gap: 4px; letter-spacing: -.35px; height: 22.600px; white-space: nowrap; }
  .green { color: #3d8b40; }
  .type-icon { width: 17px; height: 17px; border: 1px solid #3d8b40; font: 13px/15px "Liberation Serif", serif; text-align: center; letter-spacing: 0; }
  .note { width: 297px; margin-top: 42.500px; line-height: 17.200px; letter-spacing: -.25px; }
  .note b { color: #111; letter-spacing: -.44px; }
  footer { height: 49px; background: #ededed; display: flex; align-items: center; justify-content: flex-end; gap: 7px; padding: 6px 14px 0 0; color: #2b2b2b; letter-spacing: -.34px; }
</style>
